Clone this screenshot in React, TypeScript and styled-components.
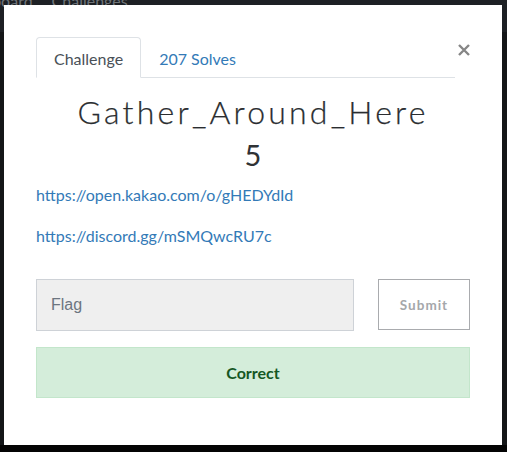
import React from "react";
import styled, { createGlobalStyle } from "styled-components";

const Global = createGlobalStyle`
  html, body { margin: 0; padding: 0; }
  body {
    width: 507px;
    height: 452px;
    overflow: hidden;
    background: #050505;
    font-family: "Lato", "Liberation Sans", sans-serif;
  }
`;

const Page = styled.div`
  width: 507px;
  height: 452px;
  display: flex;
  flex-direction: column;
  position: relative;
  overflow: hidden;
`;

const NavBar = styled.div`
  height: 32px;
  background: #1d2024;
  display: flex;
  align-items: flex-start;
  gap: 19px;
  overflow: hidden;
`;

const NavText = styled.span`
  font-size: 16px;
  color: #6f7479;
  line-height: 16px;
  margin-top: -7px;
  white-space: nowrap;
  &:first-child { margin-left: -47px; }
`;

const Content = styled.div`
  height: 413px;
  background: #141618;
`;

const Footer = styled.div`
  flex: 1;
  background: #040404;
`;

const Modal = styled.div`
  position: absolute;
  left: 4px;
  top: 5px;
  width: 498px;
  height: 440px;
  background: #ffffff;
  box-sizing: border-box;
  padding: 32px 32px 0 32px;
  display: flex;
  flex-direction: column;
`;

const Header = styled.div`
  display: flex;
  align-items: flex-start;
`;

const Tabs = styled.div`
  flex: 1;
  display: flex;
  border-bottom: 1px solid #dee2e6;
  height: 41px;
  box-sizing: border-box;
`;

const Tab = styled.div<{ $active?: boolean }>`
  box-sizing: border-box;
  padding: 2px 17px 0 17px;
  display: flex;
  align-items: center;
  font-size: 16px;
  color: ${(p) => (p.$active ? "#495057" : "#337ab7")};
  background: ${(p) => (p.$active ? "#fff" : "transparent")};
  border: 1px solid ${(p) => (p.$active ? "#dee2e6" : "transparent")};
  border-bottom-color: ${(p) => (p.$active ? "#fff" : "transparent")};
  border-radius: 4px 4px 0 0;
  margin-bottom: ${(p) => (p.$active ? "-1px" : "0")};
  height: ${(p) => (p.$active ? "41px" : "40px")};
`;

const Close = styled.button`
  width: 15px;
  height: 20px;
  padding: 0;
  margin-top: 3px;
  border: none;
  background: transparent;
  display: flex;
  align-items: center;
  justify-content: flex-end;
`;

const Title = styled.h2`
  margin: 15px 0 0 0;
  text-align: center;
  font-size: 32px;
  font-weight: 300;
  line-height: 1.2;
  letter-spacing: 3.2px;
  color: #2a2d30;
  -webkit-text-stroke: 0.25px #2a2d30;
`;

const Value = styled.h3`
  margin: 7px 0 0 0;
  text-align: center;
  font-size: 29px;
  font-weight: 400;
  line-height: 1.2;
  color: #2f3235;
`;

const Description = styled.div`
  margin-top: 10px;
`;

const Para = styled.p`
  margin: 0 0 17px 0;
  font-size: 16px;
  line-height: 24px;
`;

const Link = styled.a`
  color: #337ab7;
  text-decoration: none;
`;

const Form = styled.div`
  margin-top: 14px;
  display: flex;
  gap: 24px;
`;

const FlagInput = styled.input`
  width: 318px;
  height: 52px;
  box-sizing: border-box;
  background: #efefef;
  border: 1px solid #ced2d7;
  padding: 0 14px;
  font-family: "Liberation Sans", Arial, sans-serif;
  font-size: 16px;
  color: #495057;
  outline: none;
  &::placeholder { color: #6c7580; }
`;

const SubmitButton = styled.button`
  width: 92px;
  height: 51px;
  box-sizing: border-box;
  background: #fff;
  border: 1px solid #a9abae;
  font-family: "Lato", sans-serif;
  font-weight: 700;
  font-size: 13.5px;
  letter-spacing: 1px;
  color: #a5a7aa;
`;

const Alert = styled.div`
  margin-top: 16px;
  height: 51px;
  box-sizing: border-box;
  background: #d4edda;
  border: 1px solid #c3e6cb;
  color: #155724;
  font-weight: 700;
  font-size: 16px;
  display: flex;
  align-items: center;
  justify-content: center;
`;

export default function App() {
  return (
    <>
      <Global />
      <Page>
        <NavBar>
          <NavText>Scoreboard</NavText>
          <NavText>Challenges</NavText>
        </NavBar>
        <Content />
        <Footer />
        <Modal>
          <Header>
            <Tabs>
              <Tab $active>Challenge</Tab>
              <Tab>207 Solves</Tab>
            </Tabs>
            <Close aria-label="Close">
              <svg width="12" height="12" viewBox="0 0 12 12">
                <path d="M1 1 L11 11 M11 1 L1 11" stroke="#868686" strokeWidth="2.4" strokeLinecap="butt" />
              </svg>
            </Close>
          </Header>
          <Title>Gather_Around_Here</Title>
          <Value>5</Value>
          <Description>
            <Para>
              <Link href="#">https://open.kakao.com/o/gHEDYdId</Link>
            </Para>
            <Para>
              <Link href="#">https://discord.gg/mSMQwcRU7c</Link>
            </Para>
          </Description>
          <Form>
            <FlagInput placeholder="Flag" />
            <SubmitButton>Submit</SubmitButton>
          </Form>
          <Alert>Correct</Alert>
        </Modal>
      </Page>
    </>
  );
}
